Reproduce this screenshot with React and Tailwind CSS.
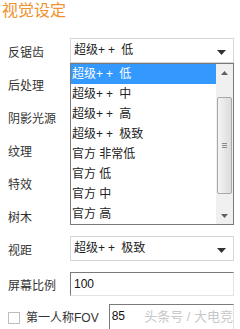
import React from 'react';

const font = { fontFamily: '"Liberation Sans", "Noto Sans CJK SC", sans-serif' };

const options = ['超级++ 低', '超级++ 中', '超级++ 高', '超级++ 极致', '官方 非常低', '官方 低', '官方 中', '官方 高'];

function Plus({ text }) {
  // widen the "++" like the original UI font
  const parts = text.split('++');
  if (parts.length < 2) return text;
  return (
    <>
      {parts[0]}
      <span className="tracking-[3px]">++</span>
      {parts[1]}
    </>
  );
}

function Caret() {
  return (
    <svg width="9" height="5" viewBox="0 0 9 5" className="absolute right-[7px] top-[11px]">
      <path d="M0 0h9L4.5 5z" fill="#333" />
    </svg>
  );
}

function Select({ value, children }) {
  return (
    <div className="relative flex-1">
      <div className="relative h-[25px] border border-[#d6d6d6] bg-white pl-[3px] text-[12px] leading-[23px] text-[#222]">
        <Plus text={value} />
        <Caret />
      </div>
      {children}
    </div>
  );
}

function Dropdown() {
  return (
    <div className="absolute left-0 top-[25px] z-10 flex h-[162px] w-full border border-[#7a7a7a] bg-white">
      <ul className="flex-1">
        {options.map((o, i) => (
          <li
            key={o}
            className={`h-[20px] pl-[1px] text-[12px] leading-[20px] ${i === 0 ? 'bg-[#3399ff] text-white' : 'text-[#222]'}`}
          >
            <Plus text={o} />
          </li>
        ))}
      </ul>
      <div className="flex w-[17px] flex-col bg-[#f0f0f0]">
        <div className="flex h-[17px] items-center justify-center">
          <svg width="7" height="4" viewBox="0 0 7 4"><path d="M3.5 0L7 4H0z" fill="#606060" /></svg>
        </div>
        <div className="ml-[1px] mt-[16px] flex h-[97px] w-[15px] items-center justify-center rounded-[2px] border border-[#a8a8a8] bg-gradient-to-r from-[#f4f4f4] to-[#dcdcdc]">
          <div className="flex flex-col gap-[1px]">
            <div className="h-px w-[5px] bg-[#8a8a8a]" />
            <div className="h-px w-[5px] bg-[#8a8a8a]" />
            <div className="h-px w-[5px] bg-[#8a8a8a]" />
          </div>
        </div>
        <div className="mt-auto flex h-[17px] items-center justify-center">
          <svg width="7" height="4" viewBox="0 0 7 4"><path d="M0 0h7L3.5 4z" fill="#606060" /></svg>
        </div>
      </div>
    </div>
  );
}

function Label({ children }) {
  return <div className="w-[70px] shrink-0 pl-[8px] pt-[4px] text-[12px] text-[#333]">{children}</div>;
}

export default function App() {
  return (
    <div className="h-[329px] w-[240px] overflow-hidden bg-white pr-[6px]" style={font}>
      <h1 className="h-[38px] pl-[2px] pt-[1px] text-[16px] leading-[20px] text-[#f0922c]">视觉设定</h1>

      <div className="flex flex-col gap-[8px]">
        <div className="flex h-[25px] items-center">
          <Label>反锯齿</Label>
          <Select value="超级++ 低">
            <Dropdown />
          </Select>
        </div>
        {['后处理', '阴影光源', '纹理', '特效', '树木'].map((l) => (
          <div key={l} className="flex h-[25px] items-center">
            <Label>{l}</Label>
          </div>
        ))}
        <div className="flex h-[25px] items-center">
          <Label>视距</Label>
          <Select value="超级++ 极致" />
        </div>
      </div>

      <div className="mt-[11px] flex h-[24px] items-center">
        <Label>屏幕比例</Label>
        <div className="h-[24px] flex-1 border border-b-[#e3e3e3] border-l-[#7a7a7a] border-r-[#e3e3e3] border-t-[#7a7a7a] pl-[3px] text-[12px] leading-[22px] text-[#111]">
          100
        </div>
      </div>

      <div className="mt-[8px] flex items-start">
        <div className="flex items-center gap-[6px] pl-[8px] pt-[5px]">
          <div className="h-[12px] w-[12px] border border-[#bdbdbd] bg-white" />
          <span className="text-[12px] text-[#333]">第一人称FOV</span>
        </div>
        <div className="relative ml-[10px] h-[26px] flex-1 border border-b-[#e3e3e3] border-l-[#7a7a7a] border-r-[#e3e3e3] border-t-[#7a7a7a] pl-[2px] text-[12px] leading-[22px] text-[#111]">
          85
          <span className="absolute right-0 top-[4px] text-[13px] leading-[16px] text-[#c8c8c8]">头条号 / 大电竞</span>
        </div>
      </div>
    </div>
  );
}
